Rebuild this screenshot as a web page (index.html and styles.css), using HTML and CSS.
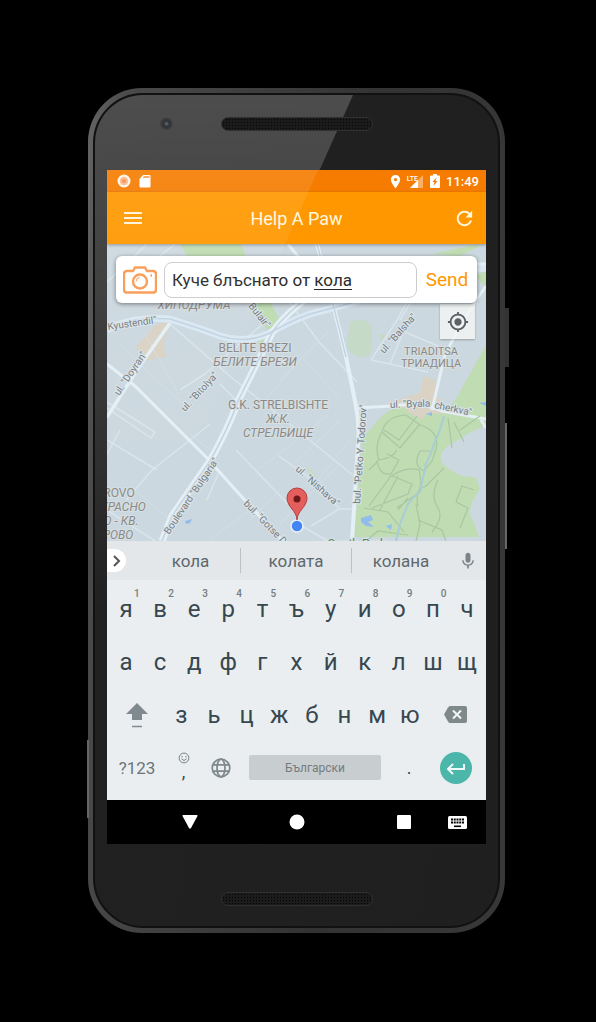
FILE: index.html
```html
<!DOCTYPE html>
<html lang="bg">
<head>
<meta charset="utf-8">
<meta name="viewport" content="width=device-width, initial-scale=1">
<title>Help A Paw</title>
<link rel="stylesheet" href="styles.css">
</head>
<body>
<div class="phone">
  <span class="side-key side-key-left"></span>
  <span class="side-key side-key-power"></span>
  <span class="side-key side-key-volume"></span>
  <div class="face">
    <div class="bezel bezel-top"><span class="lens"></span><span class="speaker"></span></div>
    <div class="screen">
      <div class="status">
        <svg width="14" height="14" viewBox="0 0 14 14"><circle cx="7" cy="7" r="5.400" fill="#fbb98c" stroke="#fff6ea" stroke-width="2.200"/><circle cx="7" cy="7" r="2" fill="#f58f4c"/></svg>
        <svg class="sd" width="12" height="14" viewBox="0 0 12 14"><path fill="#fff" d="M4 1h6.500q1 0 1 1v10.500q0 1-1 1h-9q-1 0-1-1V5z"/><path d="M4.500 2.500h6M4 3.500h6.500" stroke="#f6a45e"/></svg>
        <span class="grow"></span>
        <svg width="15" height="15" viewBox="0 0 24 24"><path fill="#fff" d="M12 1.500C7.900 1.500 4.600 4.800 4.600 8.900 4.600 14.400 12 23 12 23s7.400-8.600 7.400-14.100C19.400 4.800 16.100 1.500 12 1.500zm0 10a2.600 2.600 0 1 1 0-5.200 2.600 2.600 0 0 1 0 5.200z"/></svg>
        <span class="signal"><small>LTE</small><svg width="14" height="13" viewBox="0 0 14 13"><path fill="#fff" opacity=".4" d="M14 0v13H1z"/><path fill="#fff" d="M9 5v8H1z"/></svg></span>
        <svg class="battery" width="10" height="14" viewBox="0 0 10 14"><path fill="#fff" d="M3 0h4v1.500h2q1 0 1 1V13q0 1-1 1H1q-1 0-1-1V2.500q0-1 1-1h2z"/><path fill="#f57c00" d="M6.500 3.500 2.500 8h2l-1 4 4-5h-2z"/></svg>
        <span class="time">11:49</span>
      </div>
      <header class="appbar">
        <button class="icon-btn" aria-label="Menu"><svg width="18" height="14" viewBox="0 0 18 14"><path d="M0 2h18M0 7h18M0 12h18" stroke="#fff3d9" stroke-width="2"/></svg></button>
        <h1>Help A Paw</h1>
        <button class="icon-btn" aria-label="Refresh"><svg width="23" height="23" viewBox="0 0 24 24"><path fill="#fff8dc" d="M17.650 6.350C16.200 4.900 14.210 4 12 4c-4.420 0-7.990 3.580-7.990 8s3.570 8 7.990 8c3.730 0 6.840-2.550 7.730-6h-2.080c-.82 2.330-3.040 4-5.650 4-3.310 0-6-2.690-6-6s2.690-6 6-6c1.660 0 3.140.69 4.220 1.780L13 11h7V4l-2.350 2.350z"/></svg></button>
      </header>
      <main class="map-area">
        <svg class="map" viewBox="107 244 379 297" preserveAspectRatio="xMidYMid slice" role="img" aria-label="Map">
          <rect x="0" y="200" width="700" height="400" fill="#ccd8df"/>
          <g fill="#bfdcb3">
            <path d="M180 244h61l8 20 32 58-14 8-22-46-55-24z"/>
            <path d="M255 345l11-10 4 6z"/>
            <path d="M432 254l42-9 6 1-20 10zM476 276l10-6v18zM486 345l-30 54-13 14 43 8z"/>
            <path d="M372 428q8-14 28-23l50 5 36 10v5l-15 7-20 12q-14 8-9 19 16 16 34 14l4 12-8 13-3 11 5 10 5 14H354l8-100z"/>
            <path opacity=".55" d="M350 322q16-6 22 4v22q-2 12-14 8-14-4-10-18zM378 334h10l-6 8zM304 466l8 4 6 8-8-2z"/>
          </g>
          <g fill="#d9d2c5"><path d="M154 326l17-6-8 25 3 12-22 4-8-14zM424 376l12 4v20l-14 20-14-8v-14l12-6zM388 402l36-10 18 8 2 14-30-2z"/></g>
          <g fill="none" stroke="#d9e5ec" stroke-width="1.500">
            <path d="M107 282l40-38M117 290l58-46M171 325l60 52 70 56 54 44M180 390l25-16 60-52M107 440l50 30M107 402l48 30-4 6-44-30M152 470l-26 30M152 470l38-30 20-16M236 450l52 54M207 500l12-28M255 256l64 86 38 40M371 360l26-40 25-46M371 360l57 12M390 364l18-44M400 330l38 16M357 509l-18 0-28 17M339 508l-32-32-28-20M107 510l48 31M220 384l24 24M240 300l-60-30M120 430l-13 24M414 300l-14-12M300 525l28 16M400 320l36-60"/>
          </g>
          <g fill="none" stroke="#d3dfe6"><path d="M120 345l70 66M145 334l34 60M190 434l28 22M258 470l32-25 38-30M300 360l-40 46M330 330l-50 50M340 420l-44 42M350 440l-38 48M250 520l30-30M170 520l-40-34M210 540l40-30M320 300l26 36M290 344l50 55M340 464l-60 60"/></g>
          <g fill="none" stroke="#e4eff6">
            <path stroke-width="3" d="M107 364l28 22M135 386l72 72 34 38 42 45"/>
            <path stroke-width="3.500" d="M170 323l-31 44-32 50"/>
            <path stroke-width="7" stroke="#d9e8f3" d="M107 330q24-14 63-11 32 10 50 17 24 8 48-2 20-12 42-20l45-12 60-24 71-10"/>
            <path stroke-width="7" d="M318 290q-34 24-46 43l-34 68q-8 24-28 60l-38 55-10 25"/>
            <path stroke-width="4" d="M317 244l18 68 11 45 9 44q5 22 3 44l-6 96"/>
            <path stroke-width="3" d="M356 408l36-2q30-4 50 5l44 8M486 286q-28 40-42 72l-12 52M481 420l5 8"/>
            <path stroke-width="3" d="M288 244l16 20 16 28M420 264h66"/>
          </g>
          <g fill="none" stroke="#c3d3e1" stroke-width="1.500">
            <path d="M107 330q24-14 63-11 32 10 50 17 24 8 48-2 20-12 42-20l45-12"/>
            <path d="M318 290q-34 24-46 43l-34 68q-8 24-28 60l-38 55-10 25M317 244l18 68 11 45"/>
          </g>
          <g fill="none" stroke="#a9c6a3" stroke-width="1.200">
            <path d="M382 432q4-16 24-17l14 10q20 6 16 24l-4 12-8 10q-12-5-4-20h10M382 432q-8 14-3 28 14-2 18-10M382 432l18 16 20-24M384 430l15 10 18-24M377 460q2 16 14 14M369 470l8-8M391 474l8-14M399 460l-12-6M391 476l-22 30M391 476q16-10 28-6 6 22-8 28l-14 10M372 508l36-14 4-10-20-8M364 508l24 4 16 20M380 510l18-34M408 498l-10 12M418 506q-4-16 8-20l18-18M416 504l4 20-4 17M418 520l24 10 4 11M438 480q-8 16 0 28 6 10-6 24M474 490l-12-4-6 16 12 6-8 20M366 541l12-10 30 4M448 418l4 30M454 422l10 20M460 430l20-14"/>
          </g>
          <g fill="none" stroke="#a8cdd4" stroke-width="2"><path d="M444 416q-4 16-10 28-4 12-8 20l-6 28q-8 6-12 12l-8 20-4 17"/></g>
          <g fill="#91bdec"><path d="M361 518l10-3 2 5-5 2 6 5-8-1-5-4zM386 526l6-2-1 6zM185 521l7-2-2 4-4 1zM479 403l7-1v4zM426 414l6-2v4z"/></g>
          <g class="street">
            <text transform="translate(108 330) rotate(-8)">Kyustendil"</text>
            <text transform="translate(248 306) rotate(52)">Bulair"</text>
            <text transform="translate(119 396) rotate(-56)">ul. "Doyran"</text>
            <text transform="translate(185 412) rotate(-47)">ul. "Bitolya"</text>
            <text transform="translate(384 354) rotate(-48)">ul. "Balsha"</text>
            <text transform="translate(169 535) rotate(-56)">Boulevard "Bulgaria"</text>
            <text transform="translate(243 504) rotate(46)">bul. "Gotse Delchev"</text>
            <text transform="translate(295 470) rotate(42)">ul. "Nishava"</text>
            <text transform="translate(360 504) rotate(-86)">bul. "Petko Y. Todorov"</text>
            <text transform="translate(390 408) rotate(-2)">ul. "Byala</text>
            <text transform="translate(434 408) rotate(12)">cherkva"</text>
          </g>
          <g class="place">
            <text class="ital" x="194" y="309">ХИПОДРУМА</text>
            <text x="255" y="352">BELITE BREZI</text><text class="ital" x="255" y="366">БЕЛИТЕ БРЕЗИ</text>
            <text class="minor" x="431" y="355">TRIADITSA</text><text class="minor" x="431" y="367">ТРИАДИЦА</text>
            <text x="278" y="409">G.K. STRELBISHTE</text><text class="ital" x="278" y="423">Ж.К.</text><text class="ital" x="278" y="437">СТРЕЛБИЩЕ</text>
            <text x="119" y="497">ROVO</text><text class="ital" x="123" y="511">КРАСНО</text><text class="ital" x="121" y="525">О - КВ.</text><text class="ital" x="118" y="539">РОВО</text>
            <text class="park" x="357" y="548">South Park</text>
          </g>
          <circle cx="297" cy="526" r="6" fill="#4285f4" stroke="#eaf2fb" stroke-width="1.500"/>
          <path d="M297 520c0-9-10-13-10-22a10 10 0 0 1 20 0c0 9-10 13-10 22z" fill="#e35e5c" stroke="#b3403d"/>
          <circle cx="297" cy="499" r="3.500" fill="#6d1717"/>
        </svg>
        <form class="compose">
          <button class="camera" type="button" aria-label="Add photo"><svg width="34" height="28" viewBox="0 0 34 28" fill="none" stroke="#f99b55" stroke-width="2.400"><path d="M4 5h6l2-3.500h10L24 5h6q3 0 3 3v15.500q0 3-3 3H4q-3 0-3-3V8q0-3 3-3z"/><circle cx="17" cy="15.500" r="7"/><path d="M13 15.500q0-4 4-4" stroke-width="1"/><path d="M27.500 9.500h1.500"/></svg></button>
          <input class="message" type="text" value="Куче блъснато от кола" aria-label="Message">
          <button class="send" type="button">Send</button>
        </form>
        <button class="locate" aria-label="My location"><svg width="22" height="22" viewBox="0 0 24 24"><path fill="#5e6163" d="M12 8c-2.210 0-4 1.790-4 4s1.790 4 4 4 4-1.790 4-4-1.790-4-4-4zm8.940 3c-.46-4.170-3.770-7.480-7.940-7.940V1h-2v2.060C6.830 3.520 3.520 6.830 3.060 11H1v2h2.060c.46 4.170 3.770 7.480 7.940 7.940V23h2v-2.060c4.170-.46 7.480-3.770 7.940-7.940H23v-2h-2.060zM12 19c-3.870 0-7-3.130-7-7s3.130-7 7-7 7 3.130 7 7-3.130 7-7 7z"/></svg></button>
      </main>
      <section class="keyboard" aria-label="Keyboard">
        <div class="suggestions">
          <button class="more" aria-label="More"><svg width="10" height="12" viewBox="0 0 10 12"><path d="M2 1l5 5-5 5" fill="none" stroke="#555" stroke-width="2"/></svg></button>
          <button class="word">кола</button><button class="word">колата</button><button class="word">колана</button>
          <button class="mic" aria-label="Voice input"><svg width="20" height="20" viewBox="0 0 24 24"><path fill="#7d8487" d="M12 14c1.660 0 3-1.340 3-3V5c0-1.660-1.340-3-3-3S9 3.340 9 5v6c0 1.660 1.340 3 3 3zm5.300-3c0 3-2.540 5.100-5.300 5.100S6.700 14 6.700 11H5c0 3.410 2.720 6.230 6 6.720V21h2v-3.280c3.280-.48 6-3.300 6-6.720h-1.700z"/></svg></button>
        </div>
        <div class="keys">
          <div class="row letters">
            <button>я<sup>1</sup></button><button>в<sup>2</sup></button><button>е<sup>3</sup></button><button>р<sup>4</sup></button><button>т<sup>5</sup></button><button>ъ<sup>6</sup></button><button>у<sup>7</sup></button><button>и<sup>8</sup></button><button>о<sup>9</sup></button><button>п<sup>0</sup></button><button>ч</button>
          </div>
          <div class="row letters">
            <button>а</button><button>с</button><button>д</button><button>ф</button><button>г</button><button>х</button><button>й</button><button>к</button><button>л</button><button>ш</button><button>щ</button>
          </div>
          <div class="row third">
            <button aria-label="Shift"><svg width="22" height="26" viewBox="0 0 22 26"><path fill="#7f898e" d="M11 1l11 11h-6v6H6v-6H0z"/><path d="M6 24.500h10" stroke="#7f898e" stroke-width="1.500"/></svg></button>
            <button>з</button><button>ь</button><button>ц</button><button>ж</button><button>б</button><button>н</button><button>м</button><button>ю</button>
            <button aria-label="Backspace"><svg width="23" height="17" viewBox="0 0 23 17"><path fill="#7f898a" d="M6 0h15q2 0 2 2v13q0 2-2 2H6q-1 0-2-1.500L0 8.500 4 1.500Q5 0 6 0z"/><path d="M9 4.500l8 8m0-8l-8 8" stroke="#f1f4f6" stroke-width="2"/></svg></button>
          </div>
          <div class="row fourth">
            <button class="symbols">?123</button>
            <button class="comma"><svg width="12" height="12" viewBox="0 0 12 12"><circle cx="6" cy="6" r="4.900" fill="none" stroke="#7b8386"/><path d="M3.500 7q2.500 3 5 0M4 4v1.500M8 4v1.500" fill="none" stroke="#7b8386"/></svg><span>,</span></button>
            <button aria-label="Language"><svg width="20" height="20" viewBox="0 0 20 20" fill="none" stroke="#7f898c" stroke-width="1.700"><circle cx="10" cy="10" r="8.800"/><ellipse cx="10" cy="10" rx="4" ry="8.800"/><path d="M2 6.800h16M2 13.200h16"/></svg></button>
            <button class="space">Български</button>
            <button class="dot">.</button>
            <button class="enter" aria-label="Enter"><svg width="32" height="32" viewBox="0 0 32 32"><circle cx="16" cy="16" r="16" fill="#4bb6a9"/><path d="M24 12v5H8.500M13 12l-5 5 5 5" fill="none" stroke="#effaf8" stroke-width="2"/></svg></button>
          </div>
        </div>
      </section>
      <nav class="navbar">
        <span></span>
        <button aria-label="Back"><svg width="16" height="14" viewBox="0 0 16 14"><path fill="#fff" d="M1.500 0h13q1.500 0 1 1L9 13q-1 1.500-2 0L.5 1Q0 0 1.500 0z"/></svg></button>
        <button aria-label="Home"><svg width="16" height="16"><circle cx="8" cy="8" r="7.500" fill="#fff"/></svg></button>
        <button aria-label="Overview"><svg width="14" height="14"><rect width="14" height="14" rx="1" fill="#fff"/></svg></button>
        <button class="switcher" aria-label="Switch keyboard"><svg width="19" height="13" viewBox="0 0 19 13"><rect width="19" height="13" rx="1.500" fill="#fff"/><path d="M3 3.500h13M3 6.500h13" stroke="#000" stroke-width="2" stroke-dasharray="2 .75"/><path d="M6 10.300h7" stroke="#000" stroke-width="1.600"/></svg></button>
      </nav>
    </div>
    <div class="bezel bezel-bottom"><span class="speaker"></span></div>
  </div>
</div>
</body>
</html>
```
FILE: styles.css
```css
* { box-sizing: border-box; }
body { margin: 0; padding: 88px 91px 90px 88px; background: #000; font-family: Roboto, "Noto Sans", sans-serif; }
button { border: 0; padding: 0; margin: 0; background: none; font: inherit; color: inherit; display: flex; align-items: center; justify-content: center; }
svg { display: block; flex: none; }

.phone { position: relative; padding: 5px; border-radius: 54px; background: linear-gradient(95deg, #666, #4a4a4a 8%, #333 60%, #383838); }
.face { position: relative; border: 2px solid #111; border-radius: 50px; padding: 0 12px; overflow: hidden; background: linear-gradient(100deg, #212121, #1f1f1f); }
.face::before { content: ""; position: absolute; inset: 0; background: linear-gradient(#fff3, #ffffff24 25%, #fff0 62%); clip-path: polygon(0 0, 258px 0, 0 580px); }
.side-key { position: absolute; width: 2px; background: #666; }
.side-key-left { left: -1px; top: 652px; height: 78px; }
.side-key-power { right: -4px; top: 220px; height: 59px; width: 4px; background: #333; }
.side-key-volume { right: -2px; top: 335px; height: 126px; }

.bezel { position: relative; display: flex; justify-content: center; }
.bezel-top { height: 75px; padding-top: 22px; }
.bezel-bottom { height: 82px; padding-top: 48px; }
.speaker { width: 152px; height: 14px; border: 1px solid #303030; border-radius: 7px; background: radial-gradient(circle, #050505 1px, #1b1b1b 1px) 0 0 / 3px 3px; }
.lens { position: absolute; left: 52px; top: 22px; width: 15px; height: 15px; border-radius: 50%; background: radial-gradient(circle at 50% 45%, #555b66 1px, #2d3034 3px, #3a3b3d 5px, #4b4b4b 7px); }

.screen { position: relative; background: #000; overflow: hidden; }
.screen::after { content: ""; position: absolute; z-index: 2; inset: 0; pointer-events: none; background: linear-gradient(#ffffff18, #ffffff08 20%, #fff0 50%); clip-path: polygon(0 0, 211px 0, 0 475px); }
.status { display: flex; align-items: center; height: 22px; padding: 0 7px 0 10px; background: #f57c00; color: #fff; }
.sd { margin-left: 8px; }
.grow { flex: 1; }
.signal { display: flex; align-items: center; margin-left: 4px; }
.signal small { font-size: 7px; line-height: 8px; font-weight: 500; align-self: flex-start; margin-right: -9px; }
.battery { margin: 0 6px 0 7px; }
.time { font-size: 13px; font-weight: 500; }
.appbar { position: relative; z-index: 1; display: flex; align-items: center; justify-content: space-between; height: 52px; background: #ff9800; color: #fff8e0; box-shadow: 0 1px 3px #0005; }
.appbar h1 { margin: 0; font-size: 18px; font-weight: 400; }
.icon-btn { width: 52px; height: 52px; }
.icon-btn:last-child { padding-left: 8px; }

.map-area { position: relative; height: 297px; padding: 12px 9px; overflow: hidden; }
.map { position: absolute; inset: 0; width: 100%; height: 100%; }
.street { font-size: 10px; fill: #747b80; stroke: #dce5ea; stroke-width: 2px; paint-order: stroke; }
.place { font-size: 12px; fill: #8c8984; text-anchor: middle; stroke: #d6e0e5; stroke-width: 2px; paint-order: stroke; }
.ital { font-style: italic; }
.minor { font-size: 11px; }
.park { fill: #5b8060; }
.compose { position: relative; z-index: 1; display: flex; align-items: center; height: 47px; border-radius: 6px; background: #fff; box-shadow: 0 1px 4px #0007; }
.camera { width: 48px; height: 47px; }
.message { flex: 1; min-width: 0; height: 36px; padding: 0 7px; border: 1px solid #ccc; border-radius: 8px; outline: 0; color: #2b2b2b; font: 17px Roboto, "Noto Sans", sans-serif; background: linear-gradient(#2b2b2b, #2b2b2b) 149px 26px / 38px 1px no-repeat; }
.send { width: 60px; height: 47px; font-size: 19px; color: #ff9800; }
.locate { position: relative; width: 35px; height: 35px; margin: 1px 2px 0 auto; background: #f1f4f5d9; box-shadow: 0 1px 2px #0004; }

.keyboard { background: #eaeef1; color: #37474f; }
.suggestions { display: grid; grid-template-columns: 22px 1fr 1fr 1fr 24px; align-items: center; height: 39px; background: #e3e7ea; color: #5e686d; font-size: 17px; }
.more { width: 19px; height: 23px; border-radius: 0 12px 12px 0; background: #fff; }
.word { height: 25px; }
.word:nth-of-type(2) { padding-left: 12px; }
.word:nth-of-type(4) { padding-right: 12px; }
.word + .word { border-left: 1px solid #bcc1c4; }
.mic { height: 39px; padding-right: 12px; }
.keys { padding: 2px 2px 6px; }
.row { display: grid; height: 53px; font-size: 24px; }
.row button { position: relative; height: 53px; }
.letters { grid-template-columns: repeat(11, 1fr); }
.letters sup { position: absolute; top: 5px; left: 50%; margin-left: 8px; font-size: 10px; line-height: 14px; font-weight: 500; color: #737c80; }
.third { grid-template-columns: 56px repeat(8, 1fr) 58px; }
.fourth { grid-template-columns: 56px 37px 37px 1fr 36px 57px; align-items: center; }
.row .symbols { font-size: 17px; color: #6b7579; }
.row .comma { flex-direction: column; justify-content: flex-start; padding-top: 11px; font-size: 18px; line-height: 16px; }
.row .space { height: 25px; margin: 0 10px; border-radius: 2px; background: #c8cdd0; color: #747c80; font-size: 12px; }
.dot { font-size: 18px; }
.navbar { display: grid; grid-template-columns: 30px 1fr 1fr 1fr 29px; height: 44px; }
.navbar .switcher { justify-self: end; width: 56px; }
```
